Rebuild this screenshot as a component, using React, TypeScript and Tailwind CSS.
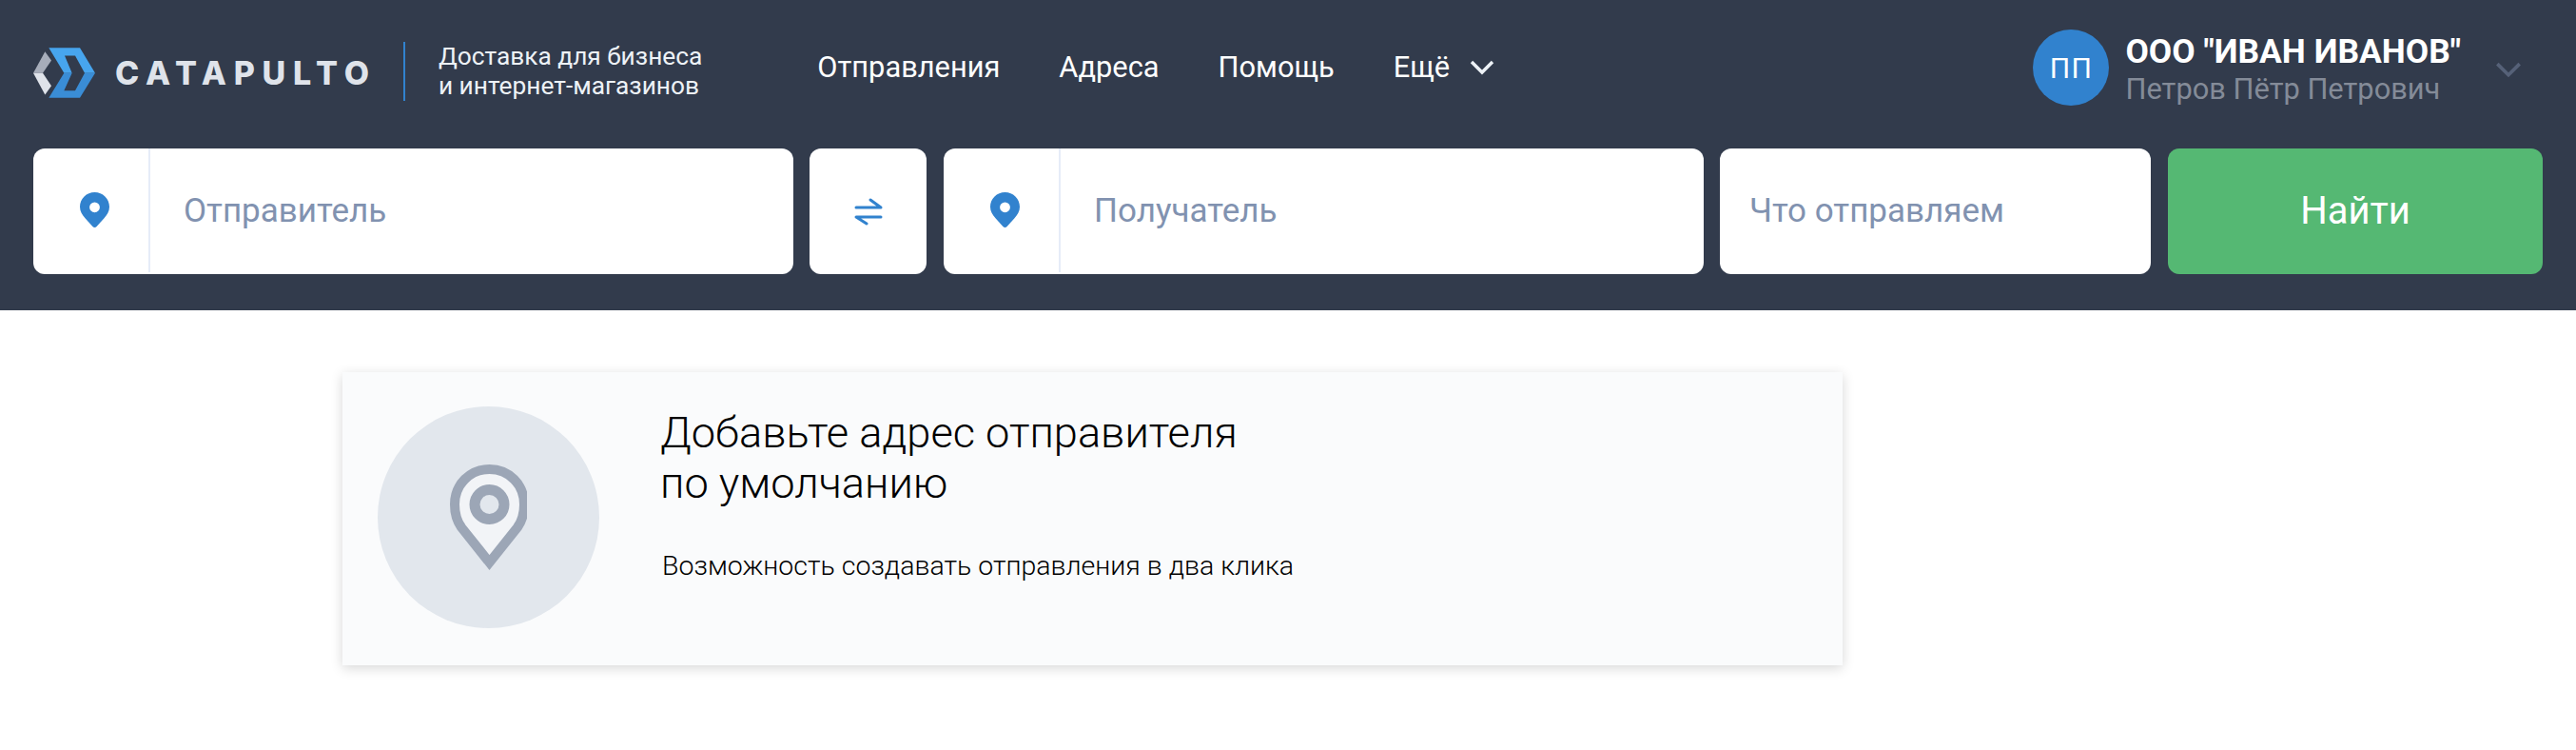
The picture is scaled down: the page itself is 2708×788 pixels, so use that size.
const Pin = () => (
  <svg width="31" height="37" viewBox="0 0 31 37" className="block">
    <path fillRule="evenodd" fill="#3182ce" d="M15.5 0C24 0 31 6.8 31 15.2C31 20 28.6 23.5 25.5 27.2C22.8 30.4 20 33.2 17.6 36C16.4 37.3 14.6 37.3 13.4 36C11 33.2 8.2 30.4 5.5 27.2C2.4 23.5 0 20 0 15.2C0 6.8 7 0 15.5 0ZM15.5 10.4A5.4 5.4 0 1 0 15.5 21.2A5.4 5.4 0 1 0 15.5 10.4Z" />
  </svg>
);

const Chevron = ({ color, w = 26 }: { color: string; w?: number }) => (
  <svg width={w} height={Math.round(w * 0.6)} viewBox="0 0 26 16" fill="none" className="block">
    <path d="M2 2L13 13L24 2" stroke={color} strokeWidth="3.4" />
  </svg>
);

const Logo = () => (
  <svg width="65" height="53" viewBox="43 60 195 158" className="block shrink-0">
    <polygon points="43,140 80,72 100,100 73,140" fill="#a7adba" />
    <polygon points="43,140 73,140 100,180 80,208" fill="#dfe3ea" />
    <polygon points="92,60 190,60 238,140 205,140 175,85 142,85 165,140 140,140" fill="#47a5ee" />
    <polygon points="140,140 165,140 140,195 175,195 205,140 238,140 190,218 92,218" fill="#3a8dd6" />
  </svg>
);

function PlaceField({ label, width }: { label: string; width: string }) {
  return (
    <div className={`flex h-[132px] bg-white rounded-[12px] overflow-hidden ${width}`}>
      <div className="w-[123px] h-[130px] flex items-center justify-center border-r-2 border-[#e6ecf8] shrink-0 pb-[2px] pl-[8px]">
        <Pin />
      </div>
      <div className="flex items-center pl-[35px] text-[35px] text-[#8192b0]">{label}</div>
    </div>
  );
}

export default function App() {
  return (
    <div className="min-h-[788px] bg-white font-['Roboto',sans-serif]">
      <header className="bg-[#323b4c] h-[326px] px-[35px]">
        <div className="h-[156px] flex items-start">
          <div className="flex items-center mt-[50px] h-[53px]">
            <Logo />
            <span className="ml-[21px] font-['Inter',sans-serif] font-extrabold text-[34px] tracking-[7.8px] text-[#dfe3ea] leading-none">CATAPULTO</span>
          </div>
          <div className="ml-[28px] mt-[44px] w-[2px] h-[62px] bg-[#3182ce]" />
          <div className="ml-[35px] mt-[44px] text-[26.3px] leading-[31px] text-[#edf2f7]">
            <div>Доставка для бизнеса</div>
            <div>и интернет-магазинов</div>
          </div>
          <nav className="ml-[121px] mt-[53px] flex items-center gap-[62px] text-[30.8px] leading-[36px] text-white">
            <span>Отправления</span>
            <span>Адреса</span>
            <span>Помощь</span>
            <span className="flex items-center gap-[21px]">Ещё <Chevron color="#edf2f7" /></span>
          </nav>
          <div className="ml-auto mr-[22px] mt-[31px] flex">
            <div className="w-[80px] h-[80px] rounded-full bg-[#3182ce] flex items-center justify-center text-white text-[30px] tracking-[0.04em] shrink-0">ПП</div>
            <div className="ml-[17px] mt-[1px]">
              <div className="text-[35.4px] leading-[44px] font-bold text-white">ООО "ИВАН ИВАНОВ"</div>
              <div className="text-[30.8px] leading-[36px] text-[#848b98]">Петров Пётр Петрович</div>
            </div>
            <div className="ml-[36px] mt-[34px]"><Chevron color="#566178" w={28} /></div>
          </div>
        </div>
        <div className="flex gap-[17px]">
          <PlaceField label="Отправитель" width="w-[799px]" />
          <div className="w-[123px] h-[132px] bg-white rounded-[12px] flex items-center justify-center">
            <svg width="30" height="30" viewBox="0 0 30 30" fill="none" className="block">
              <path d="M2 11H28L17 3" stroke="#3182ce" strokeWidth="3" strokeLinecap="round" strokeLinejoin="round" />
              <path d="M28 21H2L13 28" stroke="#3182ce" strokeWidth="3" strokeLinecap="round" strokeLinejoin="round" />
            </svg>
          </div>
          <PlaceField label="Получатель" width="w-[799px] ml-px" />
          <div className="w-[453px] h-[132px] bg-white rounded-[12px] flex items-center pl-[31px] text-[35px] text-[#8192b0]">Что отправляем</div>
          <div className="flex-1 ml-px h-[132px] bg-[#55b873] rounded-[12px] flex items-center justify-center text-[40px] text-white">Найти</div>
        </div>
      </header>
      <main className="pl-[360px] pt-[65px]">
        <div className="w-[1577px] h-[308px] bg-[#fafbfc] shadow-[0_3px_12px_rgba(0,0,0,0.16)] flex">
          <div className="ml-[37px] mt-[36px] w-[233px] h-[233px] rounded-full bg-[#e2e7ed] flex items-center justify-center shrink-0">
            <svg width="81" height="112" viewBox="0 0 81 112" className="block">
              <path d="M41.5 103L12 66C7 59 5 52 5 42C5 21 21 5 41.5 5C62 5 78 21 78 42C78 52 76 59 71 66Z" fill="#f2f4f7" stroke="#9ca6b6" strokeWidth="10" strokeMiterlimit="10" />
              <circle cx="41.5" cy="42" r="15.5" fill="#e2e7ed" stroke="#9ca6b6" strokeWidth="11" />
            </svg>
          </div>
          <div className="ml-[64px]">
            <h2 className="mt-[37px] text-[45.2px] leading-[53px] font-light text-black">Добавьте адрес отправителя<br />по умолчанию</h2>
            <p className="mt-[44px] ml-[2px] text-[28.5px] leading-[33px] font-light text-black">Возможность создавать отправления в два клика</p>
          </div>
        </div>
      </main>
    </div>
  );
}
